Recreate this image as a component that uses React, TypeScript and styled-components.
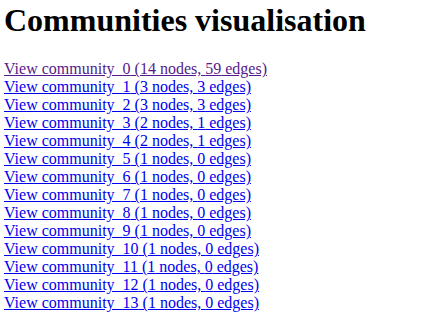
import React from "react"
import styled, { createGlobalStyle } from "styled-components"

const GlobalStyle = createGlobalStyle`
  body {
    margin: 2px 4px;
    font-family: "Liberation Serif", "Times New Roman", serif;
    font-size: 16px;
    color: #000;
    background: #fff;
  }
`

const STitle = styled.h1`
  font-size: 32px;
  font-weight: bold;
  margin: 0 0 21.44px;
`

const SList = styled.div`
  display: flex;
  flex-direction: column;
  align-items: flex-start;
  line-height: 18px;
`

const SLink = styled.a<{ $visited?: boolean }>`
  color: ${(p) => (p.$visited ? "#551a8b" : "#0000ee")};
  text-decoration: underline;
  cursor: pointer;
`

const communities = [
  [14, 59],
  [3, 3],
  [3, 3],
  [2, 1],
  [2, 1],
  [1, 0],
  [1, 0],
  [1, 0],
  [1, 0],
  [1, 0],
  [1, 0],
  [1, 0],
  [1, 0],
  [1, 0],
]

export default function App() {
  return (
    <>
      <GlobalStyle />
      <STitle>Communities visualisation</STitle>
      <SList>
        {communities.map(([nodes, edges], i) => (
          <SLink key={i} href="#" $visited={i === 0}>
            View community_{i} ({nodes} nodes, {edges} edges)
          </SLink>
        ))}
      </SList>
    </>
  )
}
